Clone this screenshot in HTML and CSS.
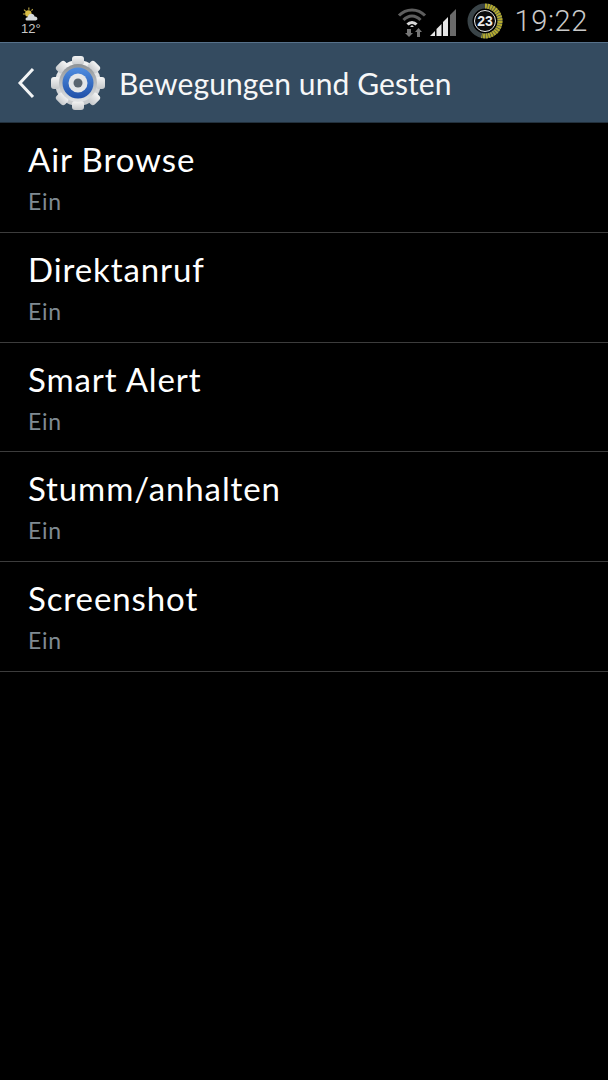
FILE: index.html
```html
<!DOCTYPE html>
<html lang="de">

<head>
    <meta charset="utf-8">
    <title>Bewegungen und Gesten</title>
    <meta name="viewport" content="width=device-width,initial-scale=1">
    <link rel="stylesheet" href="styles.css">
</head>

<body>
    <!-- status bar -->
    <div class="status">
        <div class="weather">
            <svg class="weather-icon" width="18" height="15" viewBox="0 0 16 14">
                <g stroke="#c9b24a" stroke-width="1">
                    <path d="M6 0.5v2M1.500 2.500l1.600 1.600M0.500 6.500h2M9.500 2l-1 1.500"/>
                </g>
                <circle cx="5.500" cy="6" r="3" fill="#d8bd45"/>
                <path d="M4 12.500c-1.500 0-1.500-3 .8-3 .4-2 2-3.600 4-3.200 1.600 .3 2.400 1.600 2.600 2.700 2.600-.3 3.800 3.500 1 3.500z" fill="#d5d9dc"/>
            </svg>
            <span class="temp">12°</span>
        </div>
        <div class="status-right">
            <svg width="30" height="32" viewBox="0 0 30 32">
                <g fill="none" stroke="#5e5e5e" stroke-width="3">
                    <path d="M2 10.500C9 3 21 3 28 10.500"/>
                    <path d="M6.500 15C11.500 9.500 18.500 9.500 23.500 15"/>
                </g>
                <path d="M10.500 19.500C13 16.800 17 16.800 19.500 19.500" fill="none" stroke="#d8d8d8" stroke-width="3"/>
                <path d="M13 22l2-2 2 2z" fill="#d8d8d8"/>
                <path d="M10 24h4v4h2l-4 4-4-4h2z" fill="#777"/>
                <path d="M20 32v-5h-2l3.500-4 3.500 4h-2v5z" fill="#777"/>
            </svg>
            <svg class="signal" width="27" height="28" viewBox="0 0 27 28">
                <path d="M0 28l5-5v5z" fill="#e6e6e6"/>
                <path d="M6.500 28v-7l5-5v12z" fill="#e6e6e6"/>
                <path d="M13 28v-14l5-5v19z" fill="#e6e6e6"/>
                <path d="M20 28v-21l6-6v27z" fill="#6a6a6a"/>
            </svg>
            <svg class="battery" width="36" height="36" viewBox="0 0 36 36">
                <circle cx="18" cy="18" r="15" fill="none" stroke="#3a4448" stroke-width="5"/>
                <path d="M18 3A15 15 0 1 1 14.600 32.600" fill="none" stroke="#b5ab2e" stroke-width="5" stroke-dasharray="2 .6"/>
                <circle cx="18" cy="18" r="10.500" fill="#0b0b0b" stroke="#e8e8e8" stroke-width="1"/>
                <text x="18" y="23" text-anchor="middle" class="battery-num">23</text>
            </svg>
            <span class="clock">19:22</span>
        </div>
    </div>

    <!-- action bar -->
    <div class="bar">
        <svg class="back" width="18" height="32" viewBox="0 0 18 32">
            <path d="M16 2L3 16l13 14" fill="none" stroke="#f2f4f5" stroke-width="3"/>
        </svg>
        <svg class="gear" width="56" height="56" viewBox="0 0 56 56">
            <defs>
                <linearGradient id="metal" x1="0" y1="0" x2="0" y2="1">
                    <stop offset="0" stop-color="#f4f4f4"/>
                    <stop offset="1" stop-color="#c4c7ca"/>
                </linearGradient>
                <linearGradient id="ring" x1="0" y1="0" x2="0" y2="1">
                    <stop offset="0" stop-color="#8d9296"/>
                    <stop offset="1" stop-color="#e2e4e6"/>
                </linearGradient>
                <linearGradient id="blue" x1="0" y1="0" x2="0" y2="1">
                    <stop offset="0" stop-color="#4f8de0"/>
                    <stop offset="1" stop-color="#1f4fa8"/>
                </linearGradient>
            </defs>
            <g fill="url(#metal)">
                <circle cx="28" cy="28" r="23"/>
                <rect x="22" y="1" width="12" height="9" rx="3"/>
                <rect x="22" y="46" width="12" height="9" rx="3"/>
                <rect x="1" y="22" width="9" height="12" rx="3"/>
                <rect x="46" y="22" width="9" height="12" rx="3"/>
                <rect x="22" y="1" width="12" height="9" rx="3" transform="rotate(45 28 28)"/>
                <rect x="22" y="46" width="12" height="9" rx="3" transform="rotate(45 28 28)"/>
                <rect x="1" y="22" width="9" height="12" rx="3" transform="rotate(45 28 28)"/>
                <rect x="46" y="22" width="9" height="12" rx="3" transform="rotate(45 28 28)"/>
            </g>
            <circle cx="28" cy="28" r="19" fill="url(#ring)"/>
            <circle cx="28" cy="28" r="15.500" fill="url(#blue)"/>
            <circle cx="28" cy="28" r="9.500" fill="#e4e6e8"/>
            <circle cx="28" cy="28" r="4.500" fill="#5b6670"/>
        </svg>
        <span class="bar-title">Bewegungen und Gesten</span>
    </div>

    <!-- settings list -->
    <ul class="list">
        <li class="row"><span class="row-title">Air Browse</span><span class="row-sub">Ein</span></li>
        <li class="row"><span class="row-title">Direktanruf</span><span class="row-sub">Ein</span></li>
        <li class="row"><span class="row-title">Smart Alert</span><span class="row-sub">Ein</span></li>
        <li class="row"><span class="row-title">Stumm/anhalten</span><span class="row-sub">Ein</span></li>
        <li class="row"><span class="row-title">Screenshot</span><span class="row-sub">Ein</span></li>
    </ul>
</body>

</html>
```
FILE: styles.css
```css
* { margin:0; padding:0; box-sizing:border-box }
html,body { width:100%; height:100%; background:#000; overflow:hidden }
body { font-family:"Lato","Noto Sans",sans-serif; color:#fff }

.status { height:42px; display:flex; justify-content:space-between; align-items:center; padding:0 20px 0 21px }
.weather { display:flex; flex-direction:column; align-items:center; gap:1px }
.weather-icon { display:block }
.temp { font-family:"Liberation Sans",sans-serif; font-size:13px; line-height:12px; color:#c8c8c8 }
.status-right { display:flex; align-items:center }
.signal { margin:2px 10px 0 3px }
.battery { margin-right:12px }
.battery-num { font-family:"Liberation Sans",sans-serif; font-size:14px; font-weight:bold; fill:#eee }
.clock { font-family:"Roboto","Liberation Sans",sans-serif; font-size:29px; font-weight:300; color:#c9c9c9; letter-spacing:.6px }

.bar { height:81px; background:#344b60; border-top:1px solid #56718a; border-bottom:1px solid #22303c; display:flex; align-items:center; padding-left:17px }
.gear { margin-left:15px; flex:none }
.bar-title { margin-left:13px; font-size:30px; letter-spacing:.1px; color:#f6f7f8 }

.list { list-style:none }
.row { height:109.8px; padding:17px 0 0 28px; border-bottom:1px solid #3c3c3c; display:flex; flex-direction:column }
.row-title { font-size:33px; line-height:38px; letter-spacing:.9px; color:#fff }
.row-sub { margin-top:8px; font-size:23px; line-height:30px; letter-spacing:.7px; color:#7f8a92 }
```
